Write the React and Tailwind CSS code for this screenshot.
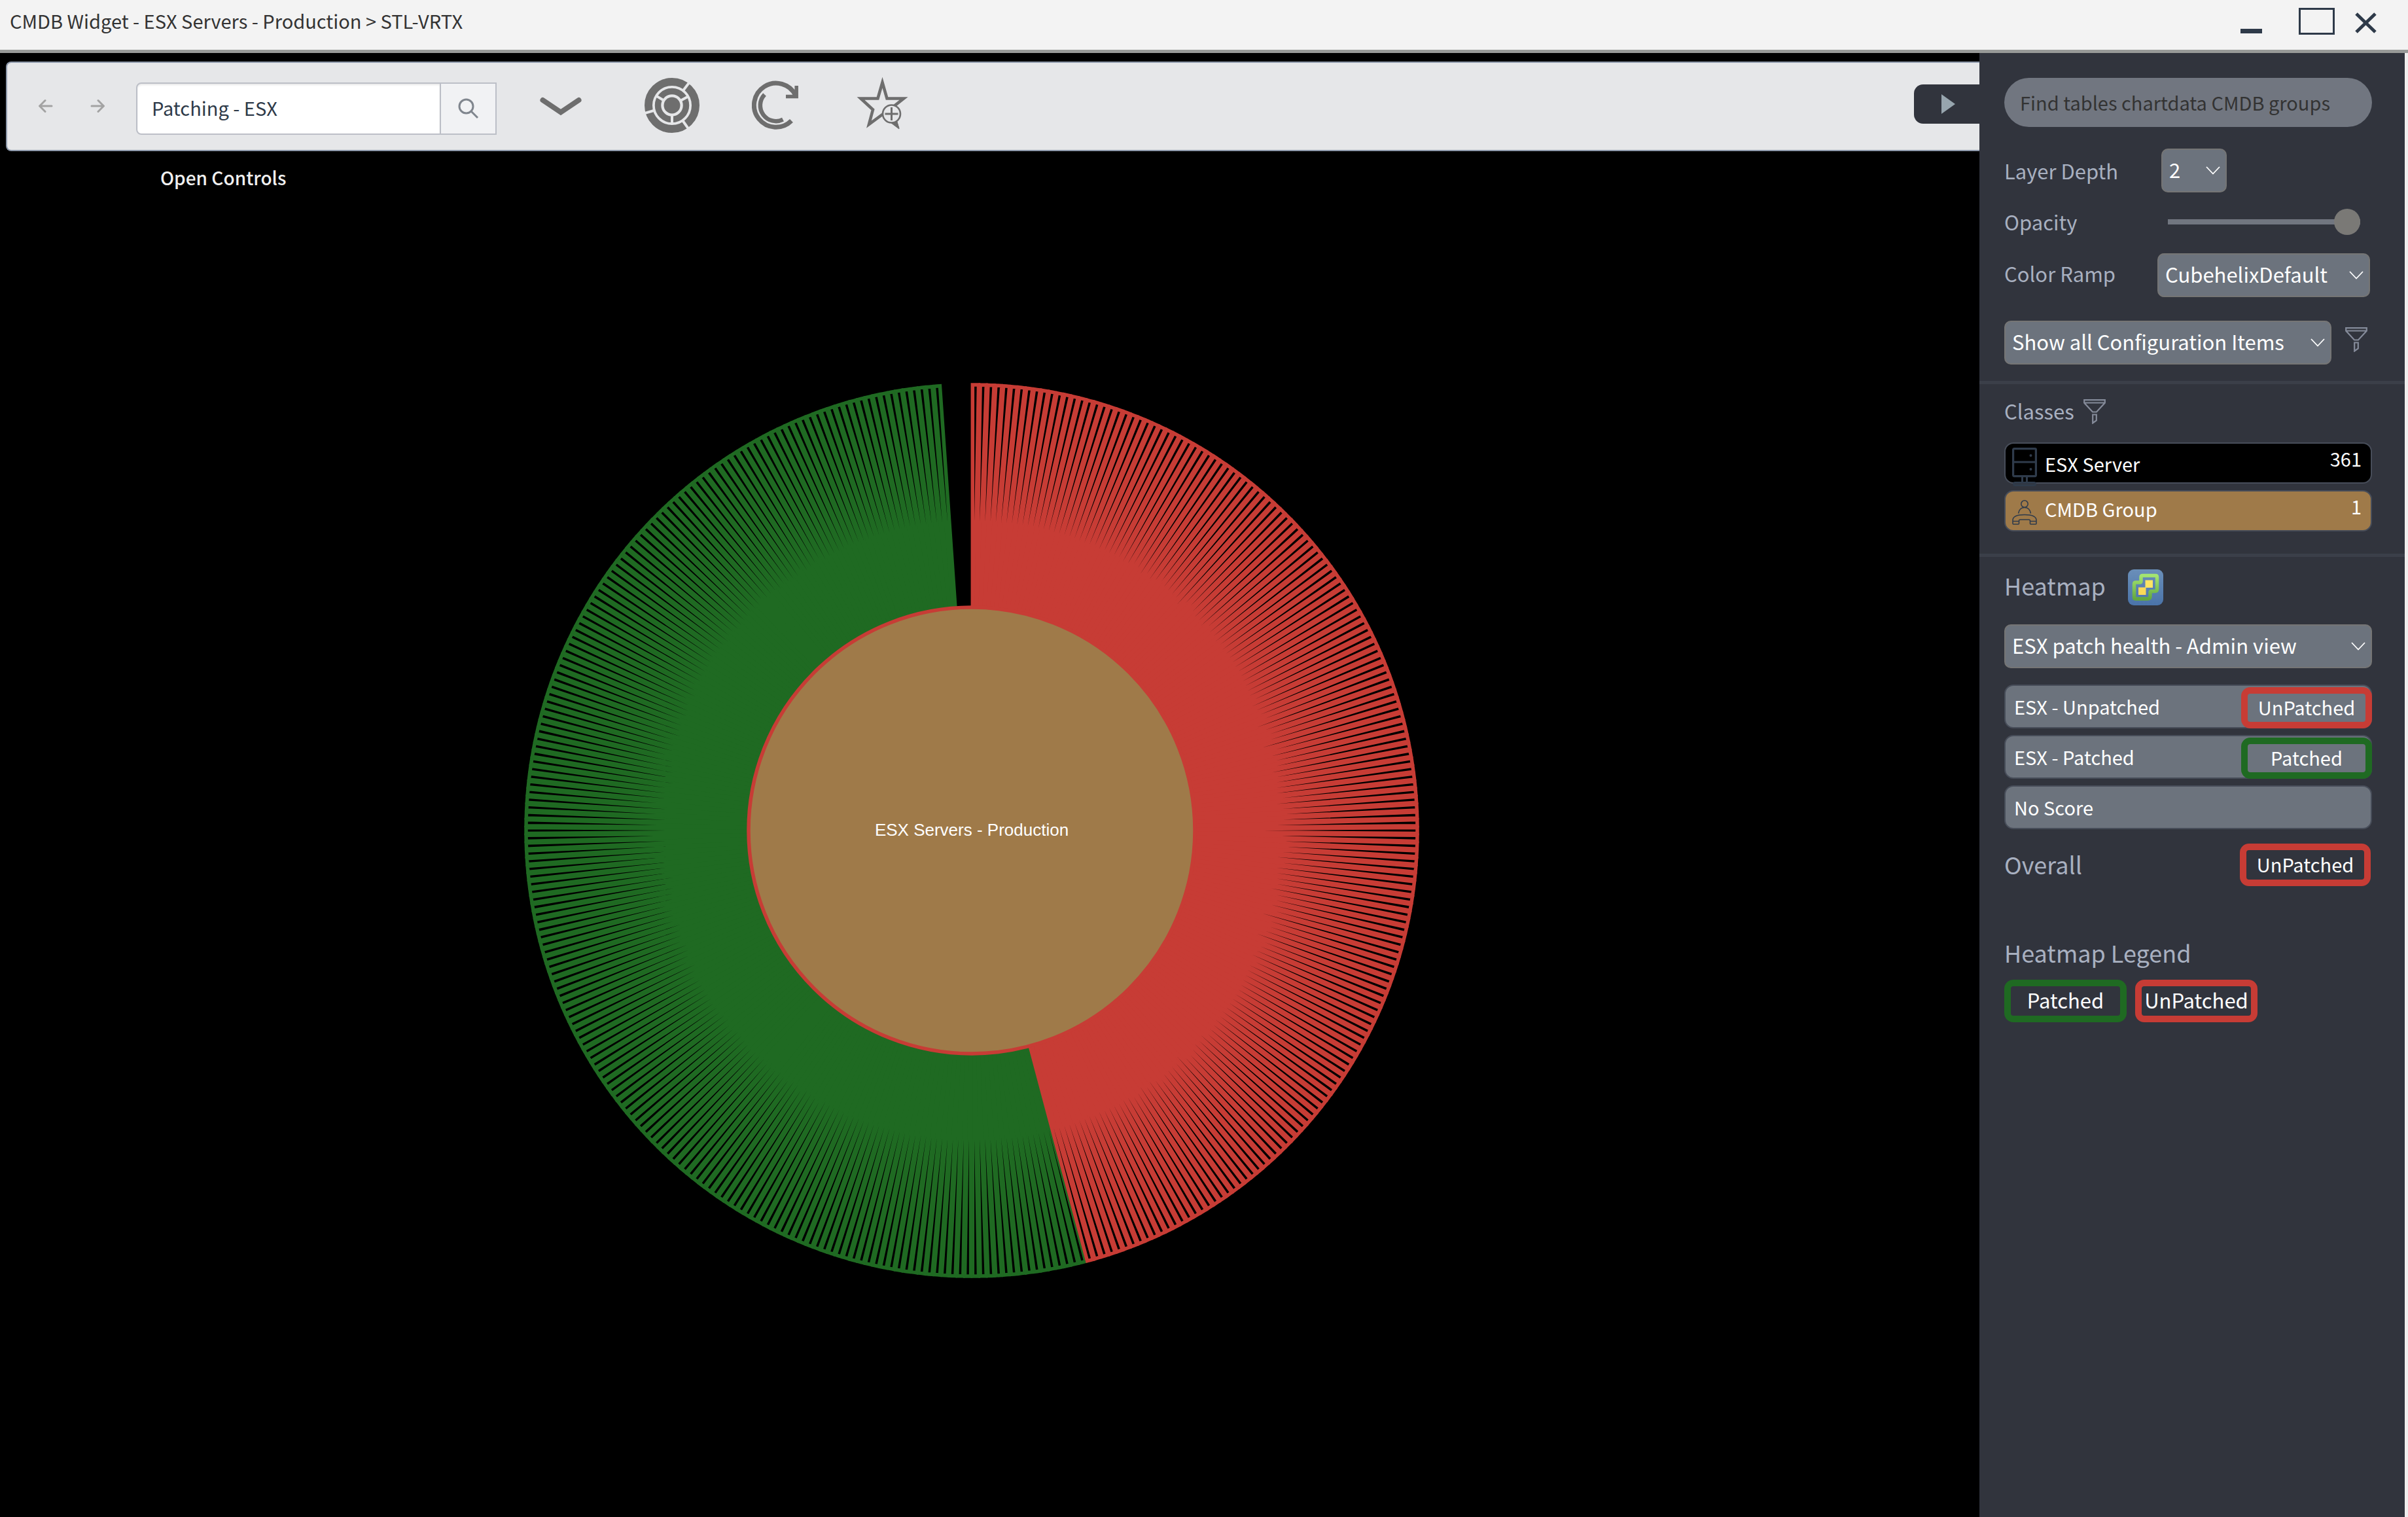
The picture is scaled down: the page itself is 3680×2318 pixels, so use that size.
import React from "react";

const RED = "#c73c35";
const GREEN = "#1f6a22";

const STEP = (2 * Math.PI) / 362;
const UNPATCHED = 166;
const PATCHED = 192;
const INNER = 341;
const OUTER = 681;
const PAD = 1.35;

function point(r, a) {
  return `${(r * Math.sin(a)).toFixed(2)} ${(-r * Math.cos(a)).toFixed(2)}`;
}

function slicePath(i) {
  const a0 = i * STEP;
  const a1 = a0 + STEP;
  const po = Math.asin(PAD / OUTER);
  const pi = Math.asin(PAD / INNER);
  return `M${point(INNER, a0 + pi)}L${point(OUTER, a0 + po)}A${OUTER} ${OUTER} 0 0 1 ${point(OUTER, a1 - po)}L${point(INNER, a1 - pi)}Z`;
}

function slices(from, count) {
  return Array.from({ length: count }, (_, k) => slicePath(from + k));
}

const redSlices = slices(0, UNPATCHED);
const greenSlices = slices(UNPATCHED, PATCHED);

function Sunburst() {
  return (
    <svg className="h-auto w-[1368px] max-w-full" viewBox="-684 -684 1368 1368" role="img" aria-label="Patch health of ESX Servers - Production">
      <g fill="#000" stroke={GREEN} strokeWidth="5.5">
        {greenSlices.map((d, i) => <path key={i} d={d} />)}
      </g>
      <g fill="#000" stroke={RED} strokeWidth="5.5">
        {redSlices.map((d, i) => <path key={i} d={d} />)}
      </g>
      <circle r={INNER} fill="#9f7a49" stroke={RED} strokeWidth="5.5" />
      <text x="0" y="8" textAnchor="middle" fill="#fff" className="font-['Liberation_Sans',sans-serif] text-[26px]">
        ESX Servers - Production
      </text>
    </svg>
  );
}

function ArrowIcon({ right }) {
  return (
    <svg width="22" height="22" viewBox="0 0 22 22" fill="none" stroke="#a3a3a3" strokeWidth="3" strokeLinecap="round">
      {right ? <path d="M2 11H20M12 2.5L20.5 11L12 19.5" /> : <path d="M20 11H2M10 2.5L1.5 11L10 19.5" />}
    </svg>
  );
}

function RingsIcon() {
  const cut = (a, r0, r1) => {
    const t = (a * Math.PI) / 180;
    return <line key={a} x1={r0 * Math.sin(t)} y1={-r0 * Math.cos(t)} x2={r1 * Math.sin(t)} y2={-r1 * Math.cos(t)} />;
  };
  return (
    <svg width="84" height="84" viewBox="-42 -42 84 84" fill="none">
      <circle r="36" stroke="#6e6e6e" strokeWidth="12" />
      <circle r="21.5" stroke="#6e6e6e" strokeWidth="9.5" />
      <circle r="12.5" fill="#6e6e6e" />
      <g stroke="#e6e7e9" strokeWidth="4">
        {[37, 145, 254].map((a) => cut(a, 29, 43))}
        {[61, 180, 301].map((a) => cut(a, 16, 27))}
      </g>
    </svg>
  );
}

function RefreshIcon() {
  return (
    <svg width="72" height="76" viewBox="1148 123 72 76" fill="none" stroke="#6e6e6e">
      <path d="M1215 146A33.5 33.5 0 1 0 1208.5 184.5" strokeWidth="7" />
      <path d="M1167.5 144.5A24 24 0 0 0 1195.5 182.6" strokeWidth="6.5" />
      <path d="M1216.2 131V147.5H1200" strokeWidth="5.5" />
    </svg>
  );
}

function StarIcon() {
  return (
    <svg width="80" height="80" viewBox="1307 117 80 80" fill="none" stroke="#6e6e6e">
      <path d="M1347.5 125L1354.5 149.5H1380L1360.5 165L1369 189L1348 173.5L1327 189L1333 166.5L1314.5 149.5H1340.5Z" strokeWidth="4.6" strokeMiterlimit="10" />
      <circle cx="1361.5" cy="173" r="13.5" fill="#e6e7e9" strokeWidth="2.6" />
      <path d="M1361.5 163V183M1351.5 173H1371.5" strokeWidth="3" />
      <path d="M1361 187L1373 196L1370 185Z" fill="#6e6e6e" strokeWidth="1" />
    </svg>
  );
}

function FunnelIcon() {
  return (
    <svg className="shrink-0" width="34" height="38" viewBox="0 0 34 38" fill="none" stroke="#858b9a" strokeWidth="2.2">
      <path d="M1.2 1.2H32.8V5.5L20 19.5H14L1.2 5.5ZM1.2 5.5H32.8" />
      <path d="M14.2 23.5H19.8V32.5L14.2 36.5Z" />
    </svg>
  );
}

function ServerIcon() {
  return (
    <svg className="absolute left-2.5 top-1.5" width="38" height="60" viewBox="0 0 38 60" fill="none" stroke="#2f3b4b" strokeWidth="3.2">
      <rect x="1.6" y="1.6" width="34.8" height="42" rx="1.5" />
      <path d="M1 22H37" />
      <path d="M15.5 45V52M22.5 45V52" strokeWidth="3" />
      <rect x="2.5" y="53.5" width="33" height="4" rx="2" strokeWidth="3" />
      <circle cx="28.5" cy="12" r="1" strokeWidth="2" />
      <circle cx="28.5" cy="33" r="1" strokeWidth="2" />
    </svg>
  );
}

function GroupIcon() {
  return (
    <svg className="absolute left-2.5 top-[13px]" width="38" height="38" viewBox="0 0 38 38" fill="none" stroke="#2f3b4b" strokeWidth="1.6">
      <circle cx="19" cy="6" r="5.2" />
      <path d="M9.6 20.5C10.5 15 14 11.5 19 11.5S27.500 15 28.500 20.500" />
      <path d="M1 35.5V31C1 25.500 6 22.500 19 22.500S37 25.500 37 31V36Q37 37 36 37H28.500Q27.500 37 27.500 36V32Q27.500 30 25.500 30H12.500Q10.500 30 10.500 32V36Q10.500 37 9.500 37H2Q1 37 1 36ZM1 32.500H10.500M27.500 32.500H37" />
    </svg>
  );
}

function HeatmapLogo() {
  return (
    <svg width="54" height="56" viewBox="0 0 54 56">
      <defs>
        <linearGradient id="logoBlue" x1="0" y1="0" x2="0" y2="1">
          <stop offset="0" stopColor="#6a8fb9" />
          <stop offset="1" stopColor="#4a73a9" />
        </linearGradient>
        <linearGradient id="logoGreen" x1="0" y1="0" x2="0" y2="1">
          <stop offset="0" stopColor="#a4e571" />
          <stop offset="1" stopColor="#64a83f" />
        </linearGradient>
      </defs>
      <rect width="54" height="55" rx="9" fill="url(#logoBlue)" />
      <path d="M22.500 9.500H42Q44.500 9.500 44.500 12V30Q44.500 33.500 41 33.500H36Q34 33.500 34 35.500V41Q34 45 30 45H12Q9.500 45 9.500 42.500V22.500Q9.500 20 12 20H18Q20 20 20 18V12Q20 9.500 22.500 9.500Z" fill="none" stroke="url(#logoGreen)" strokeWidth="5.5" />
      <rect x="26.500" y="16.500" width="11.500" height="11.500" fill="#fde463" />
      <rect x="16" y="27.500" width="11.500" height="11.500" fill="#fbd958" />
    </svg>
  );
}

function Select({ id, label, value, className }) {
  return (
    <div className={`relative h-[67px] ${className}`}>
      <select id={id} aria-label={label} defaultValue={value} className="h-full w-full appearance-none rounded-[10px] border-2 border-[#757575] bg-[#6c737d] pb-1 pl-2.5 text-[31px] text-white">
        <option>{value}</option>
      </select>
      <svg className="pointer-events-none absolute right-2.5 top-[27px]" width="22" height="13" viewBox="0 0 22 13" fill="none" stroke="#fff" strokeWidth="1.8">
        <path d="M1 1L11 11.5L21 1" />
      </svg>
    </div>
  );
}

function Badge({ tone, className, children }) {
  return (
    <span className={`flex items-center justify-center rounded-[14px] border-[10px] text-white ${tone === "red" ? "border-[#c73c35]" : "border-[#1f6a22]"} ${className}`}>
      {children}
    </span>
  );
}

function ScoreRow({ name, tone, badge }) {
  return (
    <button type="button" className="flex h-[67px] w-full items-end justify-between rounded-[14px] border-2 border-[#474d59] bg-[#6c737d] pl-[13px] text-[29px] leading-[64px] text-white">
      <span>{name}</span>
      {badge && <Badge tone={tone} className="-mr-0.5 -mb-0.5 h-[63px] w-[200px] pb-1 leading-[40px]">{badge}</Badge>}
    </button>
  );
}

function Divider() {
  return <hr className="h-[5px] border-0 bg-[#3b3f49]" />;
}

function Sidebar() {
  return (
    <aside className="w-[650px] shrink-0 bg-[#31343d] pt-[38px] text-[31px] leading-[52px] text-[#a8b0c0]">
      <div className="pl-[38px] pr-[50px]">
        <input type="search" aria-label="Find tables" placeholder="Find tables chartdata CMDB groups" className="h-[75px] w-full rounded-full bg-[#717680] pb-0.5 pl-6 pr-4 text-[29px] text-[#333] placeholder:text-[#333]" />
        <div className="mt-[33px] flex flex-col gap-[13px]">
          <div className="flex h-[67px] items-center">
            <label htmlFor="depth" className="w-60">Layer Depth</label>
            <Select id="depth" label="Layer Depth" value="2" className="w-[100px]" />
          </div>
          <div className="flex h-[67px] items-center pb-1">
            <label htmlFor="opacity" className="w-[250px]">Opacity</label>
            <input id="opacity" type="range" defaultValue="100" className="h-2 w-[294px] appearance-none bg-[#717680] [&::-webkit-slider-thumb]:size-10 [&::-webkit-slider-thumb]:appearance-none [&::-webkit-slider-thumb]:rounded-full [&::-webkit-slider-thumb]:bg-[#7a7976]" />
          </div>
          <div className="flex h-[67px] items-center">
            <label htmlFor="ramp" className="w-[234px] pb-1.5">Color Ramp</label>
            <Select id="ramp" label="Color Ramp" value="CubehelixDefault" className="w-[325px]" />
          </div>
        </div>
        <div className="mt-9 flex items-start gap-[21px]">
          <Select id="items" label="Configuration items" value="Show all Configuration Items" className="w-[500px]" />
          <button type="button" aria-label="Filter items" className="mt-2.5"><FunnelIcon /></button>
        </div>
      </div>
      <div className="mt-[25px]"><Divider /></div>
      <section className="pl-[38px] pr-[50px] pt-[15px]">
        <div className="flex items-center gap-3.5">
          <h2 className="pb-0.5">Classes</h2>
          <button type="button" aria-label="Filter classes"><FunnelIcon /></button>
        </div>
        <div className="mt-5 flex flex-col gap-2.5 text-[29px] text-white">
          <button type="button" className="relative flex h-[63px] items-start justify-between rounded-[14px] border-2 border-[#474d59] bg-black pl-[60px] pr-3.5">
            <ServerIcon />
            <span className="mt-1">ESX Server</span>
            <span className="-mt-1">361</span>
          </button>
          <button type="button" className="relative flex h-[63px] items-start justify-between rounded-[14px] border-2 border-[#474d59] bg-[#9f7a49] pl-[60px] pr-3.5">
            <GroupIcon />
            <span>CMDB Group</span>
            <span className="-mt-1">1</span>
          </button>
        </div>
      </section>
      <div className="mt-[34px]"><Divider /></div>
      <section className="pl-[38px] pr-[50px] pt-[19px]">
        <div className="flex items-center gap-[34px]">
          <h2 className="-mt-2 text-[36px]">Heatmap</h2>
          <HeatmapLogo />
        </div>
        <Select id="heatmap" label="Heatmap" value="ESX patch health - Admin view" className="mt-7 w-full" />
        <div className="mt-[25px] flex flex-col gap-2.5">
          <ScoreRow name="ESX - Unpatched" tone="red" badge="UnPatched" />
          <ScoreRow name="ESX - Patched" tone="green" badge="Patched" />
          <ScoreRow name="No Score" />
        </div>
        <div className="mt-[22px] flex items-center justify-between pr-0.5">
          <h2 className="pb-1 text-[36px]">Overall</h2>
          <Badge tone="red" className="h-[65px] w-[200px] pb-1 text-[29px] leading-[40px]">UnPatched</Badge>
        </div>
        <h2 className="mt-[75px] text-[36px]">Heatmap Legend</h2>
        <div className="mt-4 flex gap-[13px] leading-[40px]">
          <Badge tone="green" className="h-[65px] w-[187px] pb-1">Patched</Badge>
          <Badge tone="red" className="h-[65px] w-[187px] pb-1">UnPatched</Badge>
        </div>
      </section>
    </aside>
  );
}

function TitleBar() {
  return (
    <header className="flex h-[81px] items-start border-b-[5px] border-[#989a98] bg-[#f3f3f3] pl-[15px] pr-12 text-[#333]">
      <h1 className="mt-[5px] grow text-[29px] leading-[52px]">CMDB Widget - ESX Servers - Production &gt; STL-VRTX</h1>
      <div className="flex">
        <button type="button" aria-label="Minimize" className="mt-11 mr-14 h-[7px] w-[33px] bg-[#2e3a49]" />
        <button type="button" aria-label="Maximize" className="mt-3 mr-[31px] h-[41px] w-[55px] border-[3px] border-[#2e3a49]" />
        <button type="button" aria-label="Close" className="mt-[19px] h-8">
          <svg width="33" height="32" viewBox="0 0 33 32" stroke="#2e3a49" strokeWidth="5">
            <path d="M2 2L31 30M31 2L2 30" />
          </svg>
        </button>
      </div>
    </header>
  );
}

function Toolbar() {
  return (
    <div className="mt-[13px] ml-[9px] flex h-[137px] items-center rounded-l-lg border-2 border-r-0 border-[#8e99ab] bg-[#e6e7e9] pl-12">
      <button type="button" aria-label="Back" className="mr-[57px] mb-0.5"><ArrowIcon /></button>
      <button type="button" aria-label="Forward" className="mr-12 mb-0.5"><ArrowIcon right /></button>
      <div className="relative mt-1.5 mr-[66px] flex h-20 w-[551px] text-[29px]">
        <input aria-label="Search" defaultValue="Patching - ESX" className="w-[466px] rounded-l-lg border-2 border-[#bcbfc7] bg-white pb-0.5 pl-[22px] text-[#2e3a49] shadow-[inset_0_2px_3px_#00000018]" />
        <button type="button" aria-label="Search" className="flex grow items-center justify-center border-2 border-l-0 border-[#bcbfc7] bg-[#f1f2f4]">
          <svg width="32" height="32" viewBox="0 0 32 32" fill="none" stroke="#80868e" strokeWidth="3">
            <circle cx="12.5" cy="12.5" r="10.5" />
            <path d="M20.5 20.5L30 30" />
          </svg>
        </button>
        <span role="tooltip" className="absolute top-[119px] left-[37px] text-[28px] leading-[52px] font-medium whitespace-nowrap text-[#f0f0f0]">Open Controls</span>
      </div>
      <button type="button" aria-label="Expand" className="mr-24">
        <svg width="64" height="29" viewBox="0 0 64 29" fill="none" stroke="#6e6e6e" strokeWidth="8" strokeLinecap="round">
          <path d="M4.5 5L32 23.5L59.5 5" />
        </svg>
      </button>
      <button type="button" aria-label="Sunburst view" className="mr-20 mb-1"><RingsIcon /></button>
      <button type="button" aria-label="Refresh" className="mr-[87px] mb-1"><RefreshIcon /></button>
      <button type="button" aria-label="Add favorite" className="mb-2.5"><StarIcon /></button>
      <button type="button" aria-label="Hide panel" className="mb-2 ml-auto flex h-[60px] w-[100px] items-center rounded-l-[14px] bg-[#31343d] pl-[42px]">
        <svg width="21" height="30" viewBox="0 0 21 30" fill="#97a5ae"><path d="M0 0L21 15L0 30Z" /></svg>
      </button>
    </div>
  );
}

export default function App() {
  return (
    <div className="flex min-h-screen flex-col bg-black font-['Noto_Sans_CJK_SC',sans-serif]">
      <TitleBar />
      <div className="flex grow border-r-[5px] border-[#f0eeee]">
        <main className="flex min-w-0 grow flex-col">
          <Toolbar />
          <div className="flex grow items-center justify-center pr-14 pb-3">
            <Sunburst />
          </div>
        </main>
        <Sidebar />
      </div>
    </div>
  );
}
